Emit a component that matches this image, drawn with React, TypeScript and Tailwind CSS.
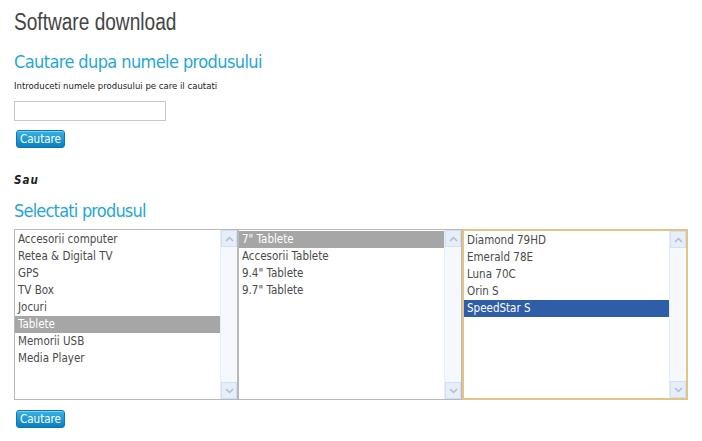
import React from "react";

const font = { fontFamily: '"DejaVu Sans", "Liberation Sans", Arial, sans-serif' };

const Button = () => (
  <button className="h-[18px] px-[3px] rounded-[3px] bg-gradient-to-b from-[#35b3e6] to-[#0a7fc0] text-white text-[11.5px] leading-[16px] border border-[#0a78b5] shadow-[inset_0_1px_0_rgba(255,255,255,0.35)] font-stretch-condensed">
    Cautare
  </button>
);

const Chevron = ({ up }: { up?: boolean }) => (
  <svg width="9" height="6" viewBox="0 0 9 6">
    <path
      d={up ? "M1 5 L4.5 1.5 L8 5" : "M1 1 L4.5 4.5 L8 1"}
      fill="none"
      stroke="#aebcd0"
      strokeWidth="1.5"
    />
  </svg>
);

const ListBox = ({
  items,
  selected,
  selColor,
  focus,
}: {
  items: string[];
  selected: number;
  selColor: string;
  focus?: boolean;
}) => (
  <div
    className={`flex h-[171px] bg-white ${
      focus ? "w-[226px] border-2 border-[#e3c483]" : "w-[224px] border border-[#b8b8b8]"
    }`}
  >
    <div className="flex-1 flex flex-col pt-px">
      {items.map((it, i) => (
        <div
          key={i}
          className={`h-[17px] leading-[17px] pl-[3px] text-[11.5px] whitespace-nowrap ${
            i == selected ? `${selColor} text-white` : "text-[#4a4a4a]"
          }`}
        >
          {it}
        </div>
      ))}
    </div>
    <div className="w-[17px] flex flex-col justify-between bg-[#f5f8fd] border-l border-[#e8eef7]">
      <div className="h-[17px] flex items-center justify-center bg-[#e6eefa] border border-[#d4e0f2]">
        <Chevron up />
      </div>
      <div className="h-[17px] flex items-center justify-center bg-[#e6eefa] border border-[#d4e0f2]">
        <Chevron />
      </div>
    </div>
  </div>
);

export default function App() {
  return (
    <div className="w-[702px] h-[441px] bg-white pl-[14px] pt-[8px] font-stretch-condensed" style={font}>
      <div
        className="text-[23px] leading-[28px] text-[#444] origin-left scale-x-[0.83] whitespace-nowrap"
        style={{ fontFamily: '"Liberation Sans", Arial, sans-serif' }}
      >
        Software download
      </div>
      <div className="mt-[14px] text-[18px] leading-[24px] text-[#1fa7da] tracking-[-0.6px]">
        Cautare dupa numele produsului
      </div>
      <div className="mt-[5px] text-[9.5px] leading-[14px] text-[#222]">
        Introduceti numele produsului pe care il cautati
      </div>
      <input className="mt-[8px] block w-[152px] h-[20px] border border-[#c8c8c8] outline-none" />
      <div className="mt-[9px] pl-[2px] flex">
        <Button />
      </div>
      <div className="mt-[25px] text-[11.5px] leading-[14px] italic font-bold text-[#222] tracking-[1px]">
        Sau
      </div>
      <div className="mt-[12px] text-[18px] leading-[24px] text-[#1fa7da] tracking-[-0.8px]">Selectati produsul</div>
      <div className="mt-[6px] flex">
        <ListBox
          items={[
            "Accesorii computer",
            "Retea & Digital TV",
            "GPS",
            "TV Box",
            "Jocuri",
            "Tablete",
            "Memorii USB",
            "Media Player",
          ]}
          selected={5}
          selColor="bg-[#a6a6a6]"
        />
        <ListBox
          items={["7\" Tablete", "Accesorii Tablete", "9.4\" Tablete", "9.7\" Tablete"]}
          selected={0}
          selColor="bg-[#a6a6a6]"
        />
        <ListBox
          items={["Diamond 79HD", "Emerald 78E", "Luna 70C", "Orin S", "SpeedStar S"]}
          selected={4}
          selColor="bg-[#2e5ea8]"
          focus
        />
      </div>
      <div className="mt-[10px] pl-[2px] flex">
        <Button />
      </div>
    </div>
  );
}
